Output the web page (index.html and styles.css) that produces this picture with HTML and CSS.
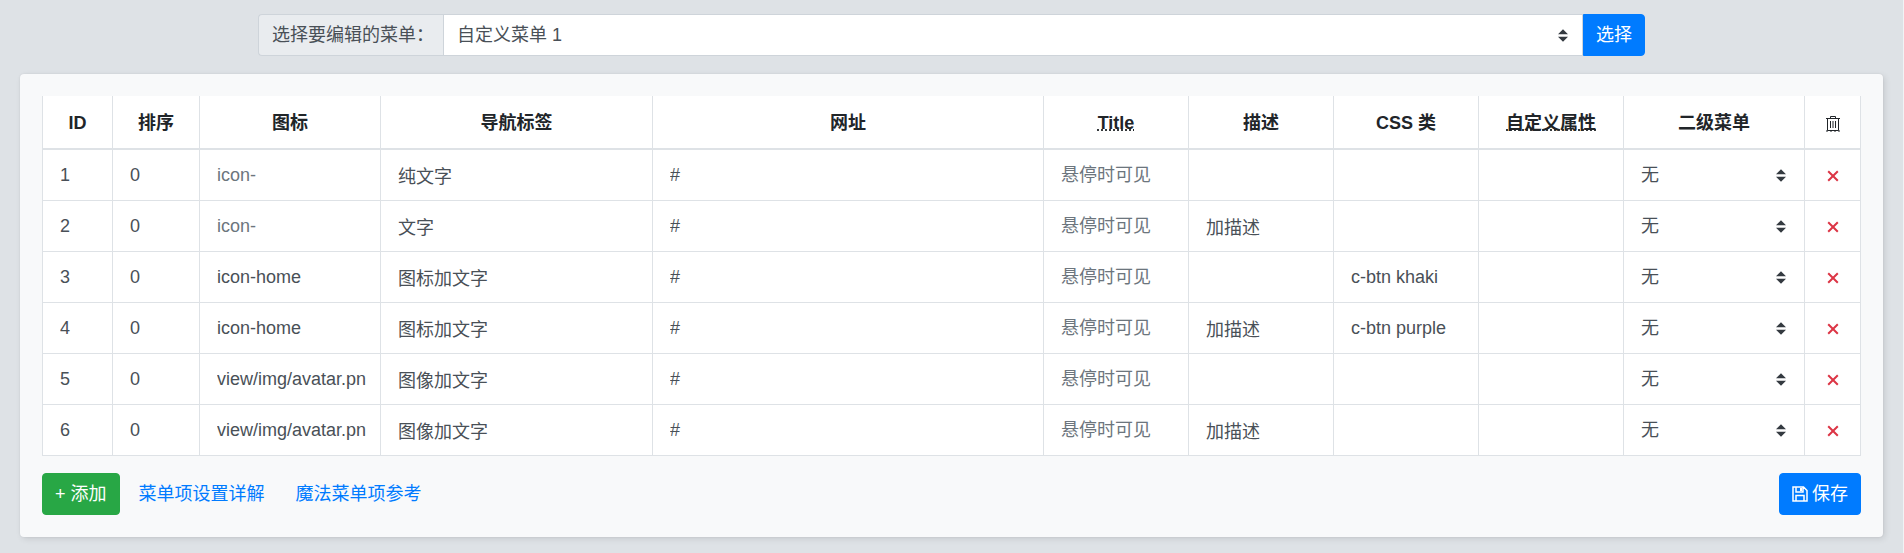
FILE: index.html
```
<!doctype html>
<html lang="zh-CN">
  <head>
    <meta charset="UTF-8" />
    <meta name="viewport" content="width=device-width, initial-scale=1.0" />
    <title>自定义菜单</title>
    <link rel="stylesheet" href="styles.css">
  </head>
  <body>
    <svg class="sprite" aria-hidden="true">
      <symbol id="icon-close" viewBox="0 0 12 12">
        <path d="M1.200 1.200 10.800 10.800M10.800 1.200 1.200 10.800" fill="none" stroke="currentColor" stroke-width="2" />
      </symbol>
    </svg>

    <!-- Menu picker -->
    <form class="picker">
      <label class="picker-label" for="menu-select">选择要编辑的菜单：</label>
      <select class="picker-select" id="menu-select">
        <option>自定义菜单 1</option>
      </select>
      <button type="submit" class="btn btn-primary">选择</button>
    </form>

    <!-- Menu items -->
    <form class="card">
      <table class="menu-table">
        <colgroup>
          <col class="col-id">
          <col class="col-order">
          <col class="col-icon">
          <col class="col-label">
          <col>
          <col class="col-text">
          <col class="col-text">
          <col class="col-text">
          <col class="col-text">
          <col class="col-sub">
          <col class="col-delete">
        </colgroup>
        <thead>
          <tr>
            <th>ID</th>
            <th>排序</th>
            <th>图标</th>
            <th>导航标签</th>
            <th>网址</th>
            <th><abbr title="title">Title</abbr></th>
            <th>描述</th>
            <th>CSS 类</th>
            <th><abbr title="attr">自定义属性</abbr></th>
            <th>二级菜单</th>
            <th>
              <abbr title="删除">
                <svg class="trash" viewBox="0 0 16 17" fill="none" stroke="currentColor">
                  <path d="M1 3.500h14M5.500 3v-1.500h5V3M2.500 4v11.500h11V4M5.500 6v7M8 6v7M10.500 6v7" />
                  <path d="M1 16h14" stroke-dasharray="2 2" />
                </svg>
              </abbr>
            </th>
          </tr>
        </thead>
        <tbody id="menu-rows"></tbody>
      </table>

      <div class="actions">
        <button type="button" class="btn btn-success">+ 添加</button>
        <a class="link" href="#">菜单项设置详解</a>
        <a class="link" href="#">魔法菜单项参考</a>
        <button type="submit" class="btn btn-primary save">
          <svg class="disk" viewBox="0 0 16 16" fill="none" stroke="currentColor" stroke-width="1.500">
            <path d="M1 1h10.500L15 4.500V15H1zM4 1v5h7V1M4 15v-5.500h8V15" />
            <path d="M8 2h2v3H8z" fill="currentColor" stroke="none" />
          </svg>
          保存
        </button>
      </div>
    </form>

    <script src="script.js"></script>
  </body>
</html>
```
FILE: styles.css
```
* {
  box-sizing: border-box;
}

body {
  margin: 0;
  padding: 14px 20px 0;
  min-height: 100vh;
  background-color: #dee2e6;
  border-right: 1px solid #f1f3f5;
  color: #212529;
  font-family: "Liberation Sans", "Noto Sans CJK SC", sans-serif;
  font-size: 18px;
  line-height: 26px;
}

input,
select,
button {
  font: inherit;
}

.sprite {
  display: none;
}

/* Buttons */
.btn {
  padding: 7px 12px;
  border: 1px solid transparent;
  border-radius: 4px;
  color: #fff;
  line-height: 26px;
  white-space: nowrap;
  cursor: pointer;
}

.btn-primary {
  background-color: #007bff;
  border-color: #007bff;
}

.btn-success {
  background-color: #28a745;
  border-color: #28a745;
}

/* Menu picker */
.picker {
  display: flex;
  width: 75%;
  max-width: 1387px;
  height: 42px;
  margin: 0 auto 18px;
}

.picker-label {
  padding: 7px 9px 7px 13px;
  background-color: #e9ecef;
  border: 1px solid #ced4da;
  border-right: 0;
  border-radius: 4px 0 0 4px;
  color: #495057;
  white-space: nowrap;
}

.picker-select,
.sub-select {
  appearance: none;
  color: #495057;
  background: #fff url("data:image/svg+xml,%3csvg xmlns='http://www.w3.org/2000/svg' viewBox='0 0 4 5'%3e%3cpath fill='%23343a40' d='M2 0L0 2h4zm0 5L0 3h4z'/%3e%3c/svg%3e") no-repeat right 14px center / 10px 13px;
}

.picker-select {
  flex: 1;
  min-width: 0;
  padding: 0 30px 0 13px;
  border: 1px solid #ced4da;
  border-radius: 0;
}

.picker .btn {
  border-radius: 0 4px 4px 0;
}

/* Card */
.card {
  padding: 22px;
  background-color: #f8f9fa;
  border-radius: 4px;
  box-shadow: 0 0 2px rgba(0, 0, 0, 0.08), 2px 2px 6px rgba(0, 0, 0, 0.1);
}

/* Table */
.menu-table {
  width: 100%;
  table-layout: fixed;
  border-collapse: collapse;
  background-color: #fff;
}

.menu-table th,
.menu-table td {
  border: 1px solid #dee2e6;
}

.menu-table th {
  height: 53px;
  padding: 2px 0 0;
  border-top: 0;
  border-bottom-width: 2px;
}

.menu-table td {
  height: 51px;
  padding: 0;
}

.col-id {
  width: 70px;
}

.col-order {
  width: 87px;
}

.col-icon,
.col-sub {
  width: 181px;
}

.col-label {
  width: 272px;
}

.col-text {
  width: 145px;
}

.col-delete {
  width: 56px;
}

.menu-table input,
.sub-select {
  display: block;
  width: 100%;
  height: 50px;
  padding: 0 12px 0 17px;
  border: 0;
  border-radius: 0;
  color: #495057;
}

.menu-table input {
  background: none;
}

.menu-table input::placeholder {
  color: #6c757d;
}

.sub-select {
  background-position: right 18px center;
}

.delete {
  display: block;
  width: 100%;
  height: 50px;
  padding: 2px 0 0;
  border: 0;
  background: none;
  color: #dc3545;
  line-height: 0;
  cursor: pointer;
}

.delete svg {
  width: 12px;
  height: 12px;
}

abbr {
  text-decoration: underline dotted;
  cursor: help;
}

.trash {
  display: block;
  width: 16px;
  height: 17px;
  margin: 0 auto;
}

/* Actions */
.actions {
  display: flex;
  align-items: center;
  margin-top: 17px;
}

.link {
  margin-left: 19px;
  color: #007bff;
  text-decoration: none;
}

.link + .link {
  margin-left: 31px;
}

.save {
  display: flex;
  align-items: center;
  gap: 4px;
  margin-left: auto;
}

.disk {
  width: 16px;
  height: 16px;
}
```
FILE: script.js
```
const items = [
  { icon: "", label: "纯文字", desc: "", css: "" },
  { icon: "", label: "文字", desc: "加描述", css: "" },
  { icon: "icon-home", label: "图标加文字", desc: "", css: "c-btn khaki" },
  { icon: "icon-home", label: "图标加文字", desc: "加描述", css: "c-btn purple" },
  { icon: "view/img/avatar.pn", label: "图像加文字", desc: "", css: "" },
  { icon: "view/img/avatar.pn", label: "图像加文字", desc: "加描述", css: "" },
];

const field = (name, value, placeholder = "") =>
  `<td><input type="text" aria-label="${name}" value="${value}" placeholder="${placeholder}"></td>`;

document.getElementById("menu-rows").innerHTML = items
  .map(
    (item, i) => `<tr>
      ${field("ID", i + 1)}
      ${field("排序", 0)}
      ${field("图标", item.icon, "icon-")}
      ${field("导航标签", item.label)}
      ${field("网址", "#")}
      ${field("Title", "", "悬停时可见")}
      ${field("描述", item.desc)}
      ${field("CSS 类", item.css)}
      ${field("自定义属性", "")}
      <td><select class="sub-select" aria-label="二级菜单"><option>无</option></select></td>
      <td><button type="button" class="delete" aria-label="删除"><svg><use href="#icon-close" /></svg></button></td>
    </tr>`,
  )
  .join("");
```
